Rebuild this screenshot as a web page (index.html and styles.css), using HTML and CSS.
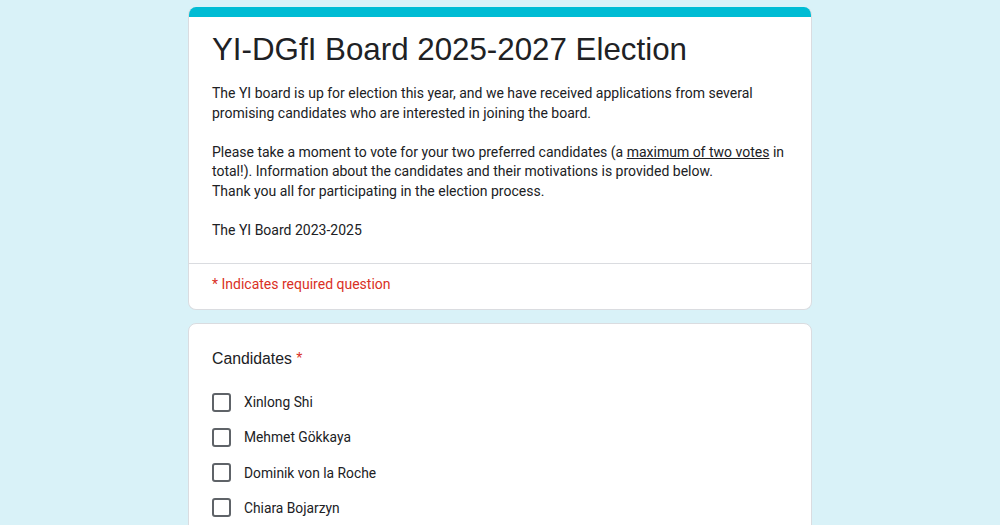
FILE: index.html
```html
<!DOCTYPE html>
<html>
<head>
<meta charset="utf-8">
<link rel="stylesheet" href="styles.css">
</head>
<body>
<div class="page">
  <div class="card header">
    <div class="bar"></div>
    <div class="head-body">
      <h1 class="title">YI-DGfI Board 2025-2027 Election</h1>
      <div class="desc">
        <p>The YI board is up for election this year, and we have received applications from several promising candidates who are interested in joining the board.</p>
        <p>Please take a moment to vote for your two preferred candidates (a <u>maximum of two votes</u> in total!). Information about the candidates and their motivations is provided below.<br>Thank you all for participating in the election process.</p>
        <p>The YI Board 2023-2025</p>
      </div>
    </div>
    <div class="required">* Indicates required question</div>
  </div>
  <div class="card question">
    <div class="q-title">Candidates <span class="star">*</span></div>
    <div class="options">
      <label class="opt"><span class="box"></span><span class="name">Xinlong Shi</span></label>
      <label class="opt"><span class="box"></span><span class="name">Mehmet Gökkaya</span></label>
      <label class="opt"><span class="box"></span><span class="name">Dominik von la Roche</span></label>
      <label class="opt"><span class="box"></span><span class="name">Chiara Bojarzyn</span></label>
    </div>
  </div>
</div>
</body>
</html>
```
FILE: styles.css
```css
html, body {
  margin: 0;
  padding: 0;
  background: #d9f2f8;
  height: 100%;
  overflow: hidden;
}
.page {
  width: 624px;
  margin: 0 auto;
  padding-top: 7px;
  display: flex;
  flex-direction: column;
  gap: 13px;
}
.card {
  background: #fff;
  border: 1px solid #dadce0;
  border-radius: 8px;
  overflow: hidden;
  color: #202124;
}
.header {
  border-top: none;
}
.bar {
  height: 10px;
  background: #00bcd4;
  margin: 0 -1px;
}
.head-body {
  padding: 13px 23px 23px;
  border-bottom: 1px solid #dadce0;
}
.title {
  margin: 0;
  font-family: "Liberation Sans", Arial, sans-serif;
  font-weight: 400;
  font-size: 31.3px;
  line-height: 40px;
  color: #202124;
}
.desc {
  margin-top: 14px;
  font-family: Roboto, "Liberation Sans", sans-serif;
  font-size: 14px;
  line-height: 19.5px;
  color: #202124;
}
.desc p {
  margin: 0 0 19.5px;
}
.desc p:last-child {
  margin-bottom: 0;
}
.required {
  padding: 10px 23px 15px;
  font-family: Roboto, "Liberation Sans", sans-serif;
  font-size: 14px;
  line-height: 20px;
  color: #d93025;
}
.question {
  padding: 23px 23px 24px;
}
.q-title {
  font-family: "Liberation Sans", Arial, sans-serif;
  font-size: 15.8px;
  line-height: 24px;
  color: #202124;
}
.star {
  color: #d93025;
}
.options {
  margin-top: 21px;
  display: flex;
  flex-direction: column;
  gap: 15.3px;
}
.opt {
  display: flex;
  align-items: center;
  gap: 13px;
  height: 20px;
}
.box {
  width: 15px;
  height: 15px;
  border: 2px solid #5f6368;
  border-radius: 3px;
  flex: none;
}
.name {
  font-family: Roboto, "Liberation Sans", sans-serif;
  font-size: 13.8px;
  color: #202124;
}
```
